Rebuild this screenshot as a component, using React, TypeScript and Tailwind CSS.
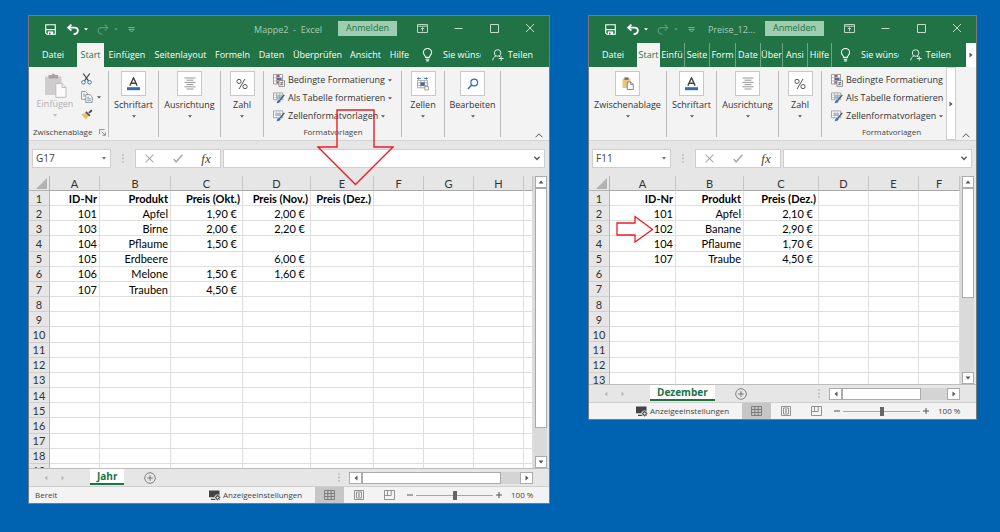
import React from 'react';

type TabDef = { label: string; cls: string; active?: boolean };

interface SheetWindowProps {
  title: string;
  cell: string;
  compact?: boolean;
  tabs: TabDef[];
  colWidths: string[];
  colNames: string[];
  rows: string[][];
  rowCount: number;
  gridHeight: string;
  tableHeight: string;
  thumbHeight: string;
  sheet: string;
  status?: string;
  hScroll: string;
  hThumb: string;
  children?: React.ReactNode;
}

/* ---------- icons ---------- */

const Caret = ({ className = 'text-[#555]' }: { className?: string }) => (
  <svg width="4" height="3" viewBox="0 0 4 3" className={`shrink-0 ${className}`}>
    <path d="M0 0.3h4L2 2.6z" fill="currentColor" />
  </svg>
);

const SaveIcon = () => (
  <svg width="11" height="11" viewBox="0 0 11 11" fill="none" stroke="#fff">
    <path d="M0.7 0.7h9.6v9.6H2L0.7 9z" strokeWidth="1.1" />
    <path d="M1 5.6h9" strokeWidth="1.2" />
    <path d="M2.8 7.4h5.4v3.2H2.8z" fill="#fff" stroke="none" />
    <path d="M4 8.6h1.4v2H4z" fill="#217346" stroke="none" />
  </svg>
);

const UndoIcon = ({ flip }: { flip?: boolean }) => (
  <svg width="12" height="11" viewBox="0 0 12 11" fill="none" stroke={flip ? '#5d9a78' : '#fff'} strokeWidth={flip ? 1.2 : 1.8}>
    <g transform={flip ? 'translate(12 0) scale(-1 1)' : undefined}>
      <path d="M4.4 0.6L1.2 3.6l3.2 3" />
      <path d="M1.4 3.6h6c2 0 3.5 1.1 3.5 3 0 2-1.6 3.4-4.4 3.8" />
    </g>
  </svg>
);

const CustomizeIcon = () => (
  <svg width="7" height="6" viewBox="0 0 7 6" fill="none" stroke="#8bb89c" strokeWidth="0.9">
    <path d="M0.5 0.6h6M0.9 2.4h5.2L3.5 5z" />
  </svg>
);

const RibbonOptionsIcon = () => (
  <svg width="11" height="9" viewBox="0 0 11 9" fill="none" stroke="#b9d6c4" strokeWidth="1">
    <path d="M0.5 0.5h10v8h-10zM0.5 2.2h10M5.5 7.4V3.6M3.8 5.2l1.7-1.6 1.7 1.6" />
  </svg>
);

const BulbIcon = () => (
  <svg width="11" height="14" viewBox="0 0 11 14" fill="none" stroke="#fff" strokeWidth="1.1">
    <path d="M3.7 9.4C3.7 7.8 1.4 7 1.4 4.6a4.1 4.1 0 0 1 8.2 0c0 2.4-2.3 3.2-2.3 4.8zM3.7 11.2h3.6M4.2 12.9h2.6" />
  </svg>
);

const PersonIcon = () => (
  <svg width="12" height="12" viewBox="0 0 12 12" fill="none" stroke="#dcebe2" strokeWidth="1">
    <circle cx="5.6" cy="4" r="3.3" />
    <path d="M0.7 11.4c0.2-2.4 1.4-3.6 3.2-4.3M7 7.1l1.3 1M9.2 7.2v4.6M6.8 9.5h4.9" />
  </svg>
);

const BigPasteIcon = () => (
  <svg width="23" height="25" viewBox="0 0 23 25">
    <path d="M1 3.5h16.5V22H1z" fill="#d0cdcf" />
    <path d="M4.5 2h3a2 2 0 0 1 3.6 0h3v3.5H4.5z" fill="#a6a4a6" />
    <path d="M11.8 10.5h6.2l4 4v9.8H11.8z" fill="#fbfbfb" stroke="#bdbdbd" />
    <path d="M18 10.5v4h4" fill="none" stroke="#bdbdbd" />
  </svg>
);

const SmallPasteIcon = () => (
  <svg width="12" height="13" viewBox="0 0 12 13">
    <path d="M0.5 1.5h8V11h-8z" fill="#f0c27c" />
    <path d="M2.4 0.4h4.2v2.4H2.4z" fill="#6d6d6d" />
    <path d="M5.3 5h3.4l2.6 2.5v5H5.3z" fill="#fff" stroke="#6d6d6d" strokeWidth="0.8" />
    <path d="M8.7 5v2.5h2.6" fill="none" stroke="#6d6d6d" strokeWidth="0.8" />
  </svg>
);

const ScissorsIcon = () => (
  <svg width="11" height="12" viewBox="0 0 11 12" fill="none">
    <path d="M2.2 0.5l5.3 7.4M8.8 0.5L3.5 7.9" stroke="#444" strokeWidth="1.2" />
    <circle cx="2.5" cy="9.3" r="1.8" stroke="#3e7ab8" strokeWidth="1" />
    <circle cx="8.5" cy="9.3" r="1.8" stroke="#3e7ab8" strokeWidth="1" />
  </svg>
);

const CopyIcon = () => (
  <svg width="12" height="12" viewBox="0 0 12 12" fill="#fff" stroke="#777" strokeWidth="0.8">
    <path d="M0.6 0.6h4l1.8 1.8v5.8H0.6z" />
    <path d="M4.8 3.6h4l2.4 2.3v5.5H4.8z" />
    <path d="M2 3.2h2M2 5h2M6.2 6.2h2M6.2 7.8h3.6M6.2 9.4h3.6" stroke="#4a84bf" />
  </svg>
);

const BrushIcon = () => (
  <svg width="12" height="11" viewBox="0 0 12 11">
    <path d="M0.3 5.5l4.5-1.7 3 3L5 10.6z" fill="#f0bd6e" />
    <path d="M4.2 3.5l1.3-1.3 4 4-1.3 1.3z" fill="#555" />
    <path d="M7.4 3.3L10.2 0.4l1.3 1.3L8.7 4.5z" fill="#444" />
  </svg>
);

const FontIcon = () => (
  <svg width="13" height="14" viewBox="0 0 13 14">
    <path d="M2.9 8.6L6.5 0.8l3.6 7.8M4 6.2h5" fill="none" stroke="#444" strokeWidth="1.4" />
    <path d="M0 10.2h13v3H0z" fill="#2f6cb0" />
  </svg>
);

const AlignIcon = () => (
  <svg width="12" height="13" viewBox="0 0 12 13" stroke="#8a8a8a" strokeWidth="0.9">
    <path d="M0.5 1h11M2.5 3.2h7M0.5 5.4h11M2.5 7.6h7M0.5 9.8h11M2.5 12h7" />
  </svg>
);

const PercentIcon = () => (
  <svg width="12" height="12" viewBox="0 0 12 12" fill="none" stroke="#555" strokeWidth="1">
    <circle cx="3" cy="3.4" r="2.1" />
    <circle cx="9" cy="8.6" r="2.1" />
    <path d="M9 1L3 11" />
  </svg>
);

const CellsIcon = () => (
  <svg width="14" height="14" viewBox="0 0 14 14" fill="none">
    <path d="M1.5 3.4h10v7.4h-10zM1.5 5.8h10M1.5 8.4h10M4.8 3.4v7.4M8.2 3.4v7.4" stroke="#999" strokeWidth="0.8" />
    <path d="M4.6 5.4h4v3.4h-4z" fill="#2f6cb0" />
    <path d="M1.5 1.4h3.4M8 1.4h3.4M2.6 0.4L1.5 1.4l1.1 1M10.3 0.4l1.1 1-1.1 1" stroke="#2f6cb0" strokeWidth="0.9" />
    <path d="M8.8 9.6h3.6v3.4H8.8z" fill="#fff" stroke="#888" strokeWidth="0.8" />
  </svg>
);

const SearchIcon = () => (
  <svg width="12" height="12" viewBox="0 0 12 12" fill="none" stroke="#2f6cb0" strokeWidth="1.2">
    <circle cx="7.2" cy="4.5" r="3.4" />
    <path d="M4.7 7L0.9 10.9" strokeWidth="1.5" />
  </svg>
);

const ConditionalIcon = () => (
  <svg width="12" height="13" viewBox="0 0 12 13">
    <path d="M0.5 0.5h9v9.5h-9z" fill="#fff" stroke="#888" strokeWidth="0.8" />
    <path d="M0.5 3.6h9M0.5 6.8h9M3.4 0.5V10" stroke="#999" strokeWidth="0.6" />
    <path d="M3.6 1h3v2.2h-3zM3.6 7.2h2.2v2.4H3.6z" fill="#d9472f" />
    <path d="M3.6 4h5v2.4h-5z" fill="#3b74b5" />
    <path d="M6 6.6h5.5v5.8H6z" fill="#fff" stroke="#777" strokeWidth="0.8" />
    <path d="M7.2 8.6h3.1M7.2 10.4h3.1M9.7 7.6L7.9 11.4" stroke="#555" strokeWidth="0.7" />
  </svg>
);

const TableFormatIcon = ({ plain }: { plain?: boolean }) => (
  <svg width="12" height="12" viewBox="0 0 13 12">
    <path d="M0.5 0.5h10v7.4h-10z" fill="#fff" stroke="#888" strokeWidth="0.8" />
    <path d={plain ? 'M2.6 2.6h6v3.4h-6z' : 'M3.8 2.8h6.4v4.8H3.8z'} fill="#a9c8e6" />
    <path d="M0.5 2.8h10M0.5 5.4h10M3.8 0.5v7.4M7.2 0.5v7.4" stroke="#999" strokeWidth={plain ? 0.3 : 0.6} />
    <path d="M12.2 2.6L7.8 8" stroke="#555" strokeWidth="1.5" />
    <path d="M4 11.6c0.6-2.6 1.8-3.6 3.4-3.6l1 1.1c-0.2 1.6-1.8 2.5-4.4 2.5z" fill="#3b74b5" />
  </svg>
);

const LauncherIcon = () => (
  <svg width="7" height="7" viewBox="0 0 7 7" fill="none" stroke="#777" strokeWidth="0.8">
    <path d="M0.5 5V0.5h5M2.6 2.6l3.6 3.6M6.3 3.4v2.9H3.4" />
  </svg>
);

const Chevron = ({ up }: { up?: boolean }) => (
  <svg width="8" height="5" viewBox="0 0 8 5" fill="none" stroke="#555" strokeWidth={up ? 1 : 1.4} className="shrink-0">
    <path d={up ? 'M0.5 4.3L4 0.8l3.5 3.5' : 'M1.4 0.8L4 3.4 6.6 0.8'} />
  </svg>
);

const Arrow = ({ dir, className = 'text-[#555]' }: { dir: 'up' | 'down' | 'left' | 'right'; className?: string }) => {
  const d = {
    up: 'M0.5 4.5L3 1.5l2.5 3z',
    down: 'M0.5 1.5L3 4.5l2.5-3z',
    left: 'M4.5 0.5v5L1.5 3z',
    right: 'M1.5 0.5v5L4.5 3z',
  }[dir];
  return (
    <svg width="6" height="6" viewBox="0 0 6 6" className={`shrink-0 ${className}`}>
      <path d={d} fill="currentColor" />
    </svg>
  );
};

const Dots = () => (
  <svg width="2" height="9" viewBox="0 0 2 9" fill="#999" className="shrink-0">
    <path d="M0.4 0.4h1.2v1.4H0.4zM0.4 3.8h1.2v1.4H0.4zM0.4 7.2h1.2v1.4H0.4z" />
  </svg>
);

const DisplaySettingsIcon = () => (
  <svg width="12" height="11" viewBox="0 0 12 11" className="shrink-0">
    <path d="M0 0.5h10.5v6.8H0zM2 8.8h5V10H2z" fill="#444" />
    <circle cx="8.6" cy="7.6" r="3.2" fill="#f3f3f3" />
    <circle cx="8.6" cy="7.6" r="1.7" fill="none" stroke="#444" strokeWidth="1.1" />
    <path d="M8.6 4.8v1M8.6 9.4v1M5.8 7.6h1M10.4 7.6h1M6.7 5.7l.7.7M9.8 8.8l.7.7M10.5 5.7l-.7.7M7.4 8.8l-.7.7" stroke="#444" strokeWidth="0.9" />
  </svg>
);

/* ---------- ribbon ---------- */

const RibbonButton = ({ label, width, children }: { label: string; width: string; children: React.ReactNode }) => (
  <div className={`shrink-0 py-1 ${width}`}>
    <button className="flex h-[66px] w-full flex-col items-center border-r border-[#bdbdbd] text-[#333]">
      <span className="flex size-[25px] items-center justify-center border border-[#c8c8c8] bg-white">{children}</span>
      <span className="mt-[3px] whitespace-nowrap leading-3">{label}</span>
      <span className="mt-1"><Caret /></span>
    </button>
  </div>
);

const StyleButton = ({ label, icon }: { label: string; icon: React.ReactNode }) => (
  <button className="flex h-[18px] items-center gap-[3px] whitespace-nowrap text-[#333]">
    {icon}
    <span>{label}</span>
    <Caret />
  </button>
);

const Ribbon = ({ compact }: { compact?: boolean }) => (
  <div className="flex h-[74px] overflow-hidden border-b border-[#d2d2d2] bg-[#f3f3f3] text-[9px]">
    <div className="flex min-w-0 flex-1 overflow-hidden">
      {compact ? (
        <RibbonButton label="Zwischenablage" width="w-[78px]"><SmallPasteIcon /></RibbonButton>
      ) : (
        <div className="w-20 shrink-0 py-1">
          <div className="flex h-[66px] flex-col justify-between border-r border-[#bdbdbd]">
            <div className="flex gap-2 pl-2">
              <button className="flex w-9 flex-col items-center pt-[2px] text-[#b0b0b0]">
                <BigPasteIcon />
                <span className="leading-3">Einfügen</span>
                <span className="mt-1"><Caret className="text-[#b0b0b0]" /></span>
              </button>
              <div className="flex flex-col gap-[6px] pt-[2px]">
                <button aria-label="Ausschneiden"><ScissorsIcon /></button>
                <button aria-label="Kopieren" className="flex items-center gap-1"><CopyIcon /><Caret /></button>
                <button aria-label="Format übertragen"><BrushIcon /></button>
              </div>
            </div>
            <div className="flex items-center justify-between pl-1 pr-[2px] text-[8px] leading-[10px] text-[#444]">
              <span>Zwischenablage</span>
              <LauncherIcon />
            </div>
          </div>
        </div>
      )}
      <RibbonButton label="Schriftart" width="w-[50px]"><FontIcon /></RibbonButton>
      <RibbonButton label="Ausrichtung" width="w-[62px]"><AlignIcon /></RibbonButton>
      <RibbonButton label="Zahl" width="w-[43px]"><PercentIcon /></RibbonButton>
      <div className="w-[138px] shrink-0 py-1">
        <div className={`flex h-[66px] flex-col justify-between pl-[9px] ${compact ? '' : 'border-r border-[#bdbdbd]'}`}>
          <div>
            <StyleButton label="Bedingte Formatierung" icon={<ConditionalIcon />} />
            <StyleButton label="Als Tabelle formatieren" icon={<TableFormatIcon />} />
            <StyleButton label="Zellenformatvorlagen" icon={<TableFormatIcon plain />} />
          </div>
          <span className="pr-2 text-center text-[8px] leading-[10px] text-[#444]">Formatvorlagen</span>
        </div>
      </div>
      {!compact && (
        <>
          <RibbonButton label="Zellen" width="w-[43px]"><CellsIcon /></RibbonButton>
          <RibbonButton label="Bearbeiten" width="w-14"><SearchIcon /></RibbonButton>
        </>
      )}
    </div>
    {compact && (
      <button aria-label="Menüband scrollen" className="flex w-[10px] items-center justify-center border border-[#cfcfcf] bg-white">
        <Arrow dir="right" />
      </button>
    )}
    <button aria-label="Menüband reduzieren" className="flex w-5 items-end justify-center pb-[2px]"><Chevron up /></button>
  </div>
);

/* ---------- window ---------- */

const SheetWindow = (props: SheetWindowProps) => {
  const { compact } = props;
  return (
    <section className="relative min-w-0 border border-[#7a7a7a] bg-[#e6e6e6]">
      <header className="flex h-[27px] items-center bg-[#217346] pl-4 text-[9px]">
        <button aria-label="Speichern"><SaveIcon /></button>
        <button aria-label="Rückgängig" className="ml-[11px] flex items-center gap-[5px] text-white"><UndoIcon /><Caret className="text-white" /></button>
        <button aria-label="Wiederholen" className="ml-[9px] flex items-center gap-[5px]"><UndoIcon flip /><Caret className="text-[#5d9a78]" /></button>
        <button aria-label="Anpassen" className="ml-[10px]"><CustomizeIcon /></button>
        <span className={`flex-1 whitespace-pre text-right text-[#a6cbb5] ${compact ? 'pr-[10px]' : 'pr-4'}`}>{props.title}</span>
        <button className="mb-[3px] h-[15px] w-[59px] bg-[#9fcdb1] text-[#217346]">Anmelden</button>
        <div className="mb-[3px] flex w-[152px] items-center justify-end gap-[26px] pr-[14px] text-[#c3dccd]">
          <button aria-label="Menüband-Optionen"><RibbonOptionsIcon /></button>
          <button aria-label="Minimieren">
            <svg width="9" height="9" viewBox="0 0 9 9" stroke="currentColor"><path d="M0.5 4.5h8" /></svg>
          </button>
          <button aria-label="Maximieren">
            <svg width="10" height="9" viewBox="0 0 10 9" fill="none" stroke="currentColor"><path d="M1.5 0.5h8v8h-8z" /></svg>
          </button>
          <button aria-label="Schließen">
            <svg width="10" height="10" viewBox="0 0 10 10" stroke="currentColor"><path d="M1 1l8 8M9 1L1 9" /></svg>
          </button>
        </div>
      </header>

      <nav className="flex h-6 bg-[#217346] text-[9px] font-medium text-white">
        {props.tabs.map((tab) => (
          <button
            key={tab.label}
            className={`flex shrink-0 items-center justify-center overflow-hidden whitespace-nowrap ${tab.cls} ${
              tab.active ? 'bg-[#f3f3f3] text-[#217346]' : ''
            }`}
          >
            {tab.label}
          </button>
        ))}
        <button className="ml-2 flex shrink-0 items-center gap-[10px]">
          <BulbIcon />
          <span className="w-[38px] overflow-hidden whitespace-nowrap text-left">Sie wünsc</span>
        </button>
        <button className={`ml-auto flex shrink-0 items-center gap-1 ${compact ? 'mr-[15px]' : 'mr-4'}`}><PersonIcon />Teilen</button>
        {compact && (
          <button aria-label="Weitere Register" className="flex w-[10px] shrink-0 items-center justify-center bg-white"><Arrow dir="right" /></button>
        )}
      </nav>

      <Ribbon compact={compact} />

      <div className="flex items-center py-2 pl-[3px] pr-1 text-[10px] text-[#444]">
        <div className="flex h-[19px] w-[79px] shrink-0 items-center border border-[#cfcfcf] bg-white pr-1">
          <input aria-label="Namenfeld" defaultValue={props.cell} className="w-full min-w-0 pl-[3px] outline-none" />
          <Caret />
        </div>
        <div className="flex w-6 shrink-0 justify-center"><Dots /></div>
        <div className="flex h-[19px] w-[86px] shrink-0 items-center justify-around border border-[#cfcfcf] bg-white">
          <button aria-label="Abbrechen">
            <svg width="9" height="9" viewBox="0 0 9 9" stroke="#aaa" strokeWidth="1.1"><path d="M0.6 0.6l7.8 7.8M8.4 0.6L0.6 8.4" /></svg>
          </button>
          <button aria-label="Eingeben">
            <svg width="10" height="9" viewBox="0 0 10 9" fill="none" stroke="#aaa" strokeWidth="1.6"><path d="M0.6 5l2.6 2.8L9.4 0.8" /></svg>
          </button>
          <button aria-label="Funktion einfügen" className="font-['Liberation_Serif',serif] text-[13px] italic leading-none">fx</button>
        </div>
        <div className="ml-[2px] flex h-[19px] min-w-0 flex-1 items-center border border-[#cfcfcf] bg-white pr-[3px]">
          <input aria-label="Bearbeitungsleiste" className="w-full min-w-0 outline-none" />
          <Chevron />
        </div>
      </div>

      <div className={`flex ${props.gridHeight}`}>
        <div className="min-w-0 flex-1 overflow-hidden">
          <table className={`w-full table-fixed border-separate border-spacing-0 font-['Lato',sans-serif] text-[11px] leading-[13px] text-black ${props.tableHeight}`}>
            <colgroup>
              {props.colWidths.map((w, i) => <col key={i} className={w} />)}
              <col />
            </colgroup>
            <thead>
              <tr className="h-[15px] text-[#333]">
                <th className="border-b border-r border-[#b5b5b5] p-0">
                  <svg width="11" height="11" viewBox="0 0 11 11" className="ml-auto mr-[2px]"><path d="M11 0v11H0z" fill="#b2b2b2" /></svg>
                </th>
                {props.colNames.map((name, i) => (
                  <th key={i} scope="col" className="border-b border-r border-b-[#a8a8a8] border-r-[#c6c6c6] p-0 font-normal">{name}</th>
                ))}
              </tr>
            </thead>
            <tbody>
              {Array.from({ length: props.rowCount }, (_, r) => (
                <tr key={r} className="bg-white">
                  <th scope="row" className="border-b border-r border-b-[#cfcfcf] border-r-[#b5b5b5] bg-[#e6e6e6] p-0 font-normal text-[#333]">{r + 1}</th>
                  {props.colNames.map((_name, c) => {
                    const value = props.rows[r]?.[c] ?? '';
                    return (
                      <td
                        key={c}
                        className={`whitespace-nowrap border-b border-r border-[#dedede] py-0 pl-0 text-right ${
                          value.endsWith('€') ? 'pr-[5px]' : 'pr-[2px]'
                        } ${r === 0 ? 'font-bold' : ''}`}
                      >
                        {value}
                      </td>
                    );
                  })}
                </tr>
              ))}
            </tbody>
          </table>
        </div>
        <div className="mr-[2px] flex w-[14px] shrink-0 flex-col bg-[#dadada] pl-[2px]">
          <button aria-label="Nach oben" className="flex h-3 items-center justify-center border border-[#ababab] bg-white"><Arrow dir="up" /></button>
          <div className={`border border-[#ababab] bg-white ${props.thumbHeight}`} />
          <button aria-label="Nach unten" className="mt-auto flex h-3 items-center justify-center border border-[#ababab] bg-white"><Arrow dir="down" /></button>
        </div>
      </div>

      <div className="flex h-[18px] items-center border-t border-[#bdbdbd] pl-[14px] pr-4">
        <button aria-label="Vorheriges Blatt"><Arrow dir="left" className="text-[#bbb]" /></button>
        <button aria-label="Nächstes Blatt" className="ml-[11px]"><Arrow dir="right" className="text-[#bbb]" /></button>
        <button className="ml-6 mb-px h-4 border-b-2 border-[#217346] bg-white px-[7px] text-[10px] font-bold leading-[14px] text-[#217346]">{props.sheet}</button>
        <button aria-label="Neues Blatt" className="ml-5">
          <svg width="12" height="12" viewBox="0 0 12 12" fill="none" stroke="#777"><circle cx="6" cy="6" r="5.3" strokeWidth="0.9" /><path d="M3.2 6h5.6M6 3.2v5.6" /></svg>
        </button>
        <div className="ml-auto mr-[9px]"><Dots /></div>
        <div className={`flex h-3 shrink-0 bg-[#d4d4d4] ${props.hScroll}`}>
          <button aria-label="Nach links" className="flex w-[13px] items-center justify-center border border-[#ababab] bg-white"><Arrow dir="left" /></button>
          <div className={`border border-[#ababab] bg-white ${props.hThumb}`} />
          <button aria-label="Nach rechts" className="ml-auto flex w-[13px] items-center justify-center border border-[#ababab] bg-white"><Arrow dir="right" /></button>
        </div>
      </div>

      <footer className="flex h-[17px] items-center border-t border-[#cfcfcf] bg-[#f3f3f3] pl-[6px] text-[8px] text-[#444]">
        <span>{props.status}</span>
        <button className="ml-auto flex w-[106px] items-center gap-[2px] whitespace-nowrap"><DisplaySettingsIcon />Anzeigeeinstellungen</button>
        <button aria-label="Normal" className="flex h-4 w-[29px] items-center justify-center bg-[#c6c6c6]">
          <svg width="11" height="10" viewBox="0 0 11 10" fill="none" stroke="#777" strokeWidth="0.9"><path d="M0.5 0.5h10v9h-10zM0.5 3.5h10M0.5 6.5h10M3.8 0.5v9M7.2 0.5v9" /></svg>
        </button>
        <button aria-label="Seitenlayout" className="flex w-[30px] justify-center">
          <svg width="10" height="10" viewBox="0 0 10 10" fill="none" stroke="#888" strokeWidth="0.9"><path d="M0.5 0.5h9v9h-9zM2.5 2h5v6h-5zM4 3.8h2M4 5h2M4 6.2h2" /></svg>
        </button>
        <button aria-label="Umbruchvorschau" className="flex w-[30px] justify-center">
          <svg width="11" height="10" viewBox="0 0 11 10" fill="none" stroke="#888" strokeWidth="0.9"><path d="M0.5 0.5h10v9h-10zM3.5 0.5v5M7.2 0.5v5M0.5 5.5h6.7" /></svg>
        </button>
        <button aria-label="Verkleinern" className="flex w-3 justify-center">
          <svg width="6" height="6" viewBox="0 0 6 6" stroke="#555"><path d="M0 3h6" /></svg>
        </button>
        <input
          type="range"
          aria-label="Zoom"
          defaultValue={50}
          className="h-[9px] w-[77px] appearance-none bg-[linear-gradient(#a6a6a6,#a6a6a6)] bg-[length:100%_1px] bg-center bg-no-repeat [&::-webkit-slider-thumb]:h-[9px] [&::-webkit-slider-thumb]:w-1 [&::-webkit-slider-thumb]:appearance-none [&::-webkit-slider-thumb]:bg-[#666]"
        />
        <button aria-label="Vergrößern" className="flex w-3 justify-center">
          <svg width="6" height="6" viewBox="0 0 6 6" stroke="#555"><path d="M0 3h6M3 0v6" /></svg>
        </button>
        <span className="w-11 whitespace-nowrap pl-[6px]">100 %</span>
      </footer>
      {props.children}
    </section>
  );
};

const yearTabs: TabDef[] = [
  { label: 'Datei', cls: 'w-12' },
  { label: 'Start', cls: 'w-[27px]', active: true },
  { label: 'Einfügen', cls: 'w-[46px]' },
  { label: 'Seitenlayout', cls: 'w-[61px]' },
  { label: 'Formeln', cls: 'w-[43px]' },
  { label: 'Daten', cls: 'w-[35px]' },
  { label: 'Überprüfen', cls: 'w-[57px]' },
  { label: 'Ansicht', cls: 'w-[39px]' },
  { label: 'Hilfe', cls: 'w-[29px]' },
];

const monthTabs: TabDef[] = [
  { label: 'Datei', cls: 'w-12' },
  { label: 'Start', cls: 'w-[23px]', active: true },
  { label: 'Einfü', cls: 'w-[25px] border-r border-[#6da385]' },
  { label: 'Seite', cls: 'w-[25px] border-r border-[#6da385]' },
  { label: 'Form', cls: 'w-[26px] border-r border-[#6da385]' },
  { label: 'Date', cls: 'w-[25px] border-r border-[#6da385]' },
  { label: 'Über', cls: 'w-[22px] border-r border-[#6da385]' },
  { label: 'Ansi', cls: 'w-[25px] border-r border-[#6da385]' },
  { label: 'Hilfe', cls: 'w-6 border-r border-[#6da385]' },
];

const yearRows = [
  ['ID-Nr', 'Produkt', 'Preis (Okt.)', 'Preis (Nov.)', 'Preis (Dez.)'],
  ['101', 'Apfel', '1,90 €', '2,00 €'],
  ['103', 'Birne', '2,00 €', '2,20 €'],
  ['104', 'Pflaume', '1,50 €'],
  ['105', 'Erdbeere', '', '6,00 €'],
  ['106', 'Melone', '1,50 €', '1,60 €'],
  ['107', 'Trauben', '4,50 €'],
];

const monthRows = [
  ['ID-Nr', 'Produkt', 'Preis (Dez.)'],
  ['101', 'Apfel', '2,10 €'],
  ['102', 'Banane', '2,90 €'],
  ['104', 'Pflaume', '1,70 €'],
  ['107', 'Traube', '4,50 €'],
];

export default function App() {
  return (
    <main className="grid min-h-screen grid-cols-[minmax(0,522fr)_minmax(0,389fr)] items-start gap-[38px] bg-[#0063b1] pb-7 pl-7 pr-[23px] pt-[15px] font-['Open_Sans','Noto_Sans',sans-serif]">
      <SheetWindow
        title="Mappe2  -  Excel"
        cell="G17"
        tabs={yearTabs}
        colWidths={['w-[21px]', 'w-[50px]', 'w-[71px]', 'w-[72px]', 'w-[68px]', 'w-[63px]', 'w-[50px]', 'w-[50px]', 'w-[50px]']}
        colNames={['A', 'B', 'C', 'D', 'E', 'F', 'G', 'H', '']}
        rows={yearRows}
        rowCount={19}
        gridHeight="h-[292px]"
        tableHeight="h-[303px]"
        thumbHeight="h-[240px]"
        sheet="Jahr"
        status="Bereit"
        hScroll="w-[184px]"
        hThumb="w-[139px]"
      >
        <svg width="77" height="77" viewBox="0 0 77 77" fill="none" stroke="#ed1c24" strokeWidth="1.4" className="absolute left-[288px] top-[93px]">
          <path d="M20 1h37v37h19L38.500 75.500 1 38h19z" />
        </svg>
      </SheetWindow>
      <SheetWindow
        compact
        title="Preise_12..."
        cell="F11"
        tabs={monthTabs}
        colWidths={['w-[21px]', 'w-[66px]', 'w-[68px]', 'w-[75px]', 'w-[50px]', 'w-[50px]']}
        colNames={['A', 'B', 'C', 'D', 'E', 'F']}
        rows={monthRows}
        rowCount={13}
        gridHeight="h-[208px]"
        tableHeight="h-[212px]"
        thumbHeight="h-[110px]"
        sheet="Dezember"
        hScroll="w-[131px]"
        hThumb="w-[79px]"
      >
        <svg width="38" height="28" viewBox="0 0 38 28" fill="none" stroke="#ed1c24" strokeWidth="1.3" className="absolute left-[27px] top-[199px]">
          <path d="M1 8h18V1.500L36.500 14.500 19 27v-7H1z" />
        </svg>
      </SheetWindow>
    </main>
  );
}
